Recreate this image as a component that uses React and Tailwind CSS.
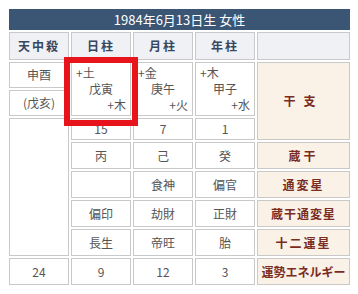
import React from "react";

const jp = { fontFamily: '"Noto Sans CJK JP", "Noto Sans", sans-serif' };

const cell = "border border-[#c9c9c9] bg-white text-center align-middle text-[12px] text-[#555] p-0";
const head = "border border-[#c9c9c9] bg-[#eff1f5] text-center align-middle text-[12px] font-semibold tracking-[2px] text-[#37465f] p-0";
const label = "border border-[#c9c9c9] bg-[#faf1e7] text-center align-middle text-[12px] font-semibold text-[#7a2c1f] p-0";

function Stem({ top, name, bottom }) {
  return (
    <td rowSpan={2} className={cell + " align-top"}>
      <div className="flex h-[52px] flex-col px-[4px] pt-[2px] leading-[16px] text-[12px]">
        <span className="self-start">{top}</span>
        <span className="self-center">{name}</span>
        <span className="self-end">{bottom}</span>
      </div>
    </td>
  );
}

export default function App() {
  return (
    <div className="relative h-[294px] w-[358px] bg-white" style={jp}>
      <table className="absolute left-[7px] top-[7px] table-fixed border-separate border-spacing-[2px]">
        <colgroup>
          <col className="w-[60px]" />
          <col className="w-[60px]" />
          <col className="w-[60px]" />
          <col className="w-[60px]" />
          <col className="w-[93px]" />
        </colgroup>
        <tbody>
          <tr className="h-[21px]">
            <th colSpan={5} className="bg-[#3b5675] p-0 text-center align-middle text-[13px] font-normal text-white">
              1984年6月13日生 女性
            </th>
          </tr>
          <tr className="h-[28px]">
            <th className={head}>天中殺</th>
            <th className={head}>日柱</th>
            <th className={head}>月柱</th>
            <th className={head}>年柱</th>
            <th className={head}></th>
          </tr>
          <tr className="h-[26px]">
            <td className={cell}>申酉</td>
            <Stem top="+土" name="戊寅" bottom="+木" />
            <Stem top="+金" name="庚午" bottom="+火" />
            <Stem top="+木" name="甲子" bottom="+水" />
            <td rowSpan={3} className={label + " tracking-[8px]"}>干支</td>
          </tr>
          <tr className="h-[26px]">
            <td className={cell}>(戊亥)</td>
          </tr>
          <tr className="h-[22px]">
            <td rowSpan={5} className={cell}></td>
            <td className={cell}>15</td>
            <td className={cell}>7</td>
            <td className={cell}>1</td>
          </tr>
          <tr className="h-[27px]">
            <td className={cell}>丙</td>
            <td className={cell}>己</td>
            <td className={cell}>癸</td>
            <td className={label + " tracking-[3px]"}>蔵干</td>
          </tr>
          <tr className="h-[27px]">
            <td className={cell}></td>
            <td className={cell}>食神</td>
            <td className={cell}>偏官</td>
            <td className={label + " tracking-[2px]"}>通変星</td>
          </tr>
          <tr className="h-[27px]">
            <td className={cell}>偏印</td>
            <td className={cell}>劫財</td>
            <td className={cell}>正財</td>
            <td className={label + " tracking-[1px]"}>蔵干通変星</td>
          </tr>
          <tr className="h-[27px]">
            <td className={cell}>長生</td>
            <td className={cell}>帝旺</td>
            <td className={cell}>胎</td>
            <td className={label + " tracking-[2px]"}>十二運星</td>
          </tr>
          <tr className="h-[27px]">
            <td className={cell}>24</td>
            <td className={cell}>9</td>
            <td className={cell}>12</td>
            <td className={cell}>3</td>
            <td className={label + " text-[10.5px]"}>運勢エネルギー</td>
          </tr>
        </tbody>
      </table>
      {/* highlight around the day pillar */}
      <div className="pointer-events-none absolute left-[64px] top-[57px] h-[69px] w-[74px] border-[6px] border-[#e8141c]" />
    </div>
  );
}
